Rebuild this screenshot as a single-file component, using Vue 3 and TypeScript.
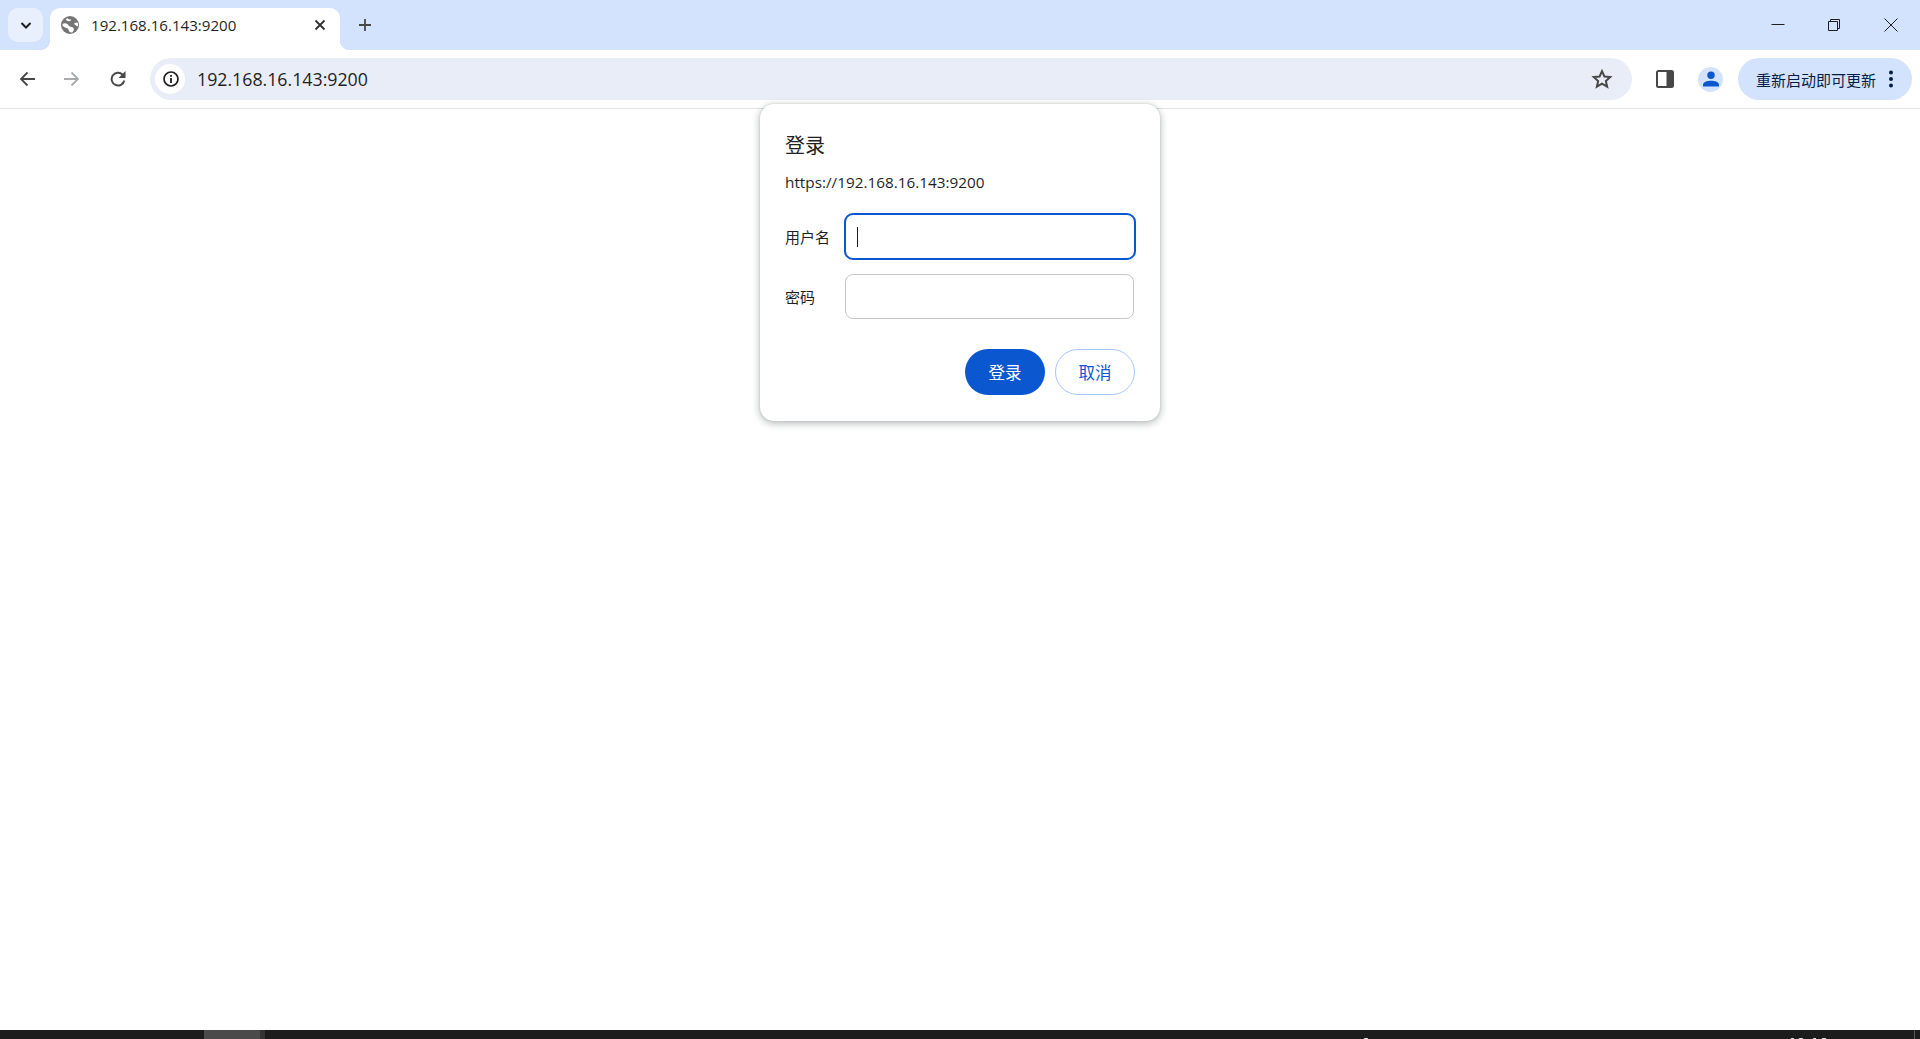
<script setup lang="ts">
const title: string = '192.168.16.143:9200'
</script>

<template>
  <div class="page">
    <header class="strip">
      <button class="tab-search" aria-label="tabs">
        <svg width="16" height="16" viewBox="0 0 16 16"><path d="M3.500 6l4.500 4.500L12.500 6" fill="none" stroke="#1f1f1f" stroke-width="2"/></svg>
      </button>
      <div class="tab">
        <svg class="globe" width="18" height="18" viewBox="0 0 18 18">
          <circle cx="9" cy="9" r="9" fill="#757575"/>
          <path d="M1.500 8C3 7.200 5 7 6.500 8.300c1 1 1.500 2 3 2.500 1.500.5 2.800.5 3.300 1.900.3 1-.3 2.300-1.300 3.500-1.300.4-2.800.2-3.300-.6-.5-1-.5-2-1.500-3C5.300 11.800 2.800 11.300 1.500 9.500zM6 2.200C7.300 3 8.800 3.500 10 3.500c.5.800-.5 1.700-2 1.700S5.300 4.300 4.800 3.200zM13.300 7c1.300-.5 2.500-.7 3.400-.5.400 1.300.4 2.700.2 3.900-1.200-.4-2.700-.9-3.300-1.800-.3-.5-.4-1-.3-1.600z" fill="#fff"/>
        </svg>
        <span class="tab-title">{{ title }}</span>
        <svg class="tab-close" width="12" height="12" viewBox="0 0 12 12"><path d="M1.500 1.500l9 9M10.500 1.500l-9 9" stroke="#303134" stroke-width="1.800"/></svg>
      </div>
      <svg class="plus" width="14" height="14" viewBox="0 0 14 14"><path d="M7 1v12M1 7h12" stroke="#474747" stroke-width="1.800"/></svg>
      <div class="win">
        <svg width="14" height="14" viewBox="0 0 14 14"><path d="M.500 6.500h13" stroke="#1f1f1f" stroke-width="1"/></svg>
        <svg width="14" height="14" viewBox="0 0 14 14"><path d="M1.500 3.500h9v9h-9zM3.500 3.500v-2h9v9h-2" fill="none" stroke="#1f1f1f" stroke-width="1"/></svg>
        <svg width="14" height="14" viewBox="0 0 14 14"><path d="M.500.500l13 13M13.500.500l-13 13" stroke="#1f1f1f" stroke-width="1"/></svg>
      </div>
    </header>

    <nav class="toolbar">
      <svg class="nav back" width="16" height="16" viewBox="0 0 16 16"><path d="M16 8H2.500M8.500 1.500L2 8l6.500 6.500" fill="none" stroke="#474747" stroke-width="1.800"/></svg>
      <svg class="nav fwd" width="16" height="16" viewBox="0 0 16 16"><path d="M0 8h13.500M7.500 1.500L14 8l-6.500 6.500" fill="none" stroke="#a8a9aa" stroke-width="1.800"/></svg>
      <svg class="nav reload" width="16" height="16" viewBox="0 0 16 16"><path d="M14.300 9.500A6.400 6.400 0 1 1 12.500 3.500" fill="none" stroke="#474747" stroke-width="1.900"/><path d="M15.500 0v7h-7z" fill="#474747"/></svg>
      <div class="omnibox">
        <span class="info">
          <svg width="16" height="16" viewBox="0 0 16 16"><circle cx="8" cy="8" r="7" fill="none" stroke="#1f1f1f" stroke-width="1.700"/><path d="M7.100 7h1.800v5H7.100zM7.100 4h1.800v1.800H7.100z" fill="#1f1f1f"/></svg>
        </span>
        <span class="url">{{ title }}</span>
        <svg class="star" width="22" height="22" viewBox="0 0 20 20"><path d="M10 2.800l2.200 4.900 5.300.5-4 3.600 1.200 5.200-4.700-2.800-4.700 2.800 1.200-5.200-4-3.600 5.300-.5z" fill="none" stroke="#474747" stroke-width="1.800"/></svg>
      </div>
      <svg class="side" width="18" height="18" viewBox="0 0 18 18"><rect width="18" height="18" rx="2.500" fill="#474747"/><rect x="2" y="2" width="8.500" height="14" fill="#fff"/></svg>
      <span class="avatar">
        <svg width="16" height="16" viewBox="0 0 16 16"><circle cx="8" cy="4.200" r="3.700" fill="#0b57d0"/><path d="M0 15.500v-1.800c0-2.500 4-3.900 8-3.900s8 1.400 8 3.900v1.800z" fill="#0b57d0"/></svg>
      </span>
      <div class="update">
        <span class="update-text">重新启动即可更新</span>
        <svg width="6" height="18" viewBox="0 0 6 18"><circle cx="3" cy="2.500" r="2" fill="#041e49"/><circle cx="3" cy="9" r="2" fill="#041e49"/><circle cx="3" cy="15.500" r="2" fill="#041e49"/></svg>
      </div>
    </nav>

    <main class="content"></main>

    <footer class="taskbar">
      <span class="task-active"></span><span class="task-edge"></span>
      <i class="peek p1"></i><i class="peek p2"></i><i class="peek p3"></i><i class="peek p4"></i><i class="peek p5"></i>
      <i class="task-line"></i>
    </footer>

    <section class="dialog">
      <h2 class="dlg-title">登录</h2>
      <p class="dlg-url">https://192.168.16.143:9200</p>
      <div class="field first">
        <label class="lbl">用户名</label>
        <div class="input focused"><i class="caret"></i></div>
      </div>
      <div class="field second">
        <label class="lbl">密码</label>
        <div class="input"></div>
      </div>
      <div class="actions">
        <button class="btn primary">登录</button>
        <button class="btn ghost">取消</button>
      </div>
    </section>
  </div>
</template>

<style scoped>
.page {
  position: relative;
  width: 1920px;
  height: 1039px;
  display: flex;
  flex-direction: column;
  overflow: hidden;
  background: #fff;
  font-family: "Open Sans", "Noto Sans CJK SC", sans-serif;
  color: #1f1f1f;
}
.strip {
  height: 50px;
  flex: none;
  background: #d3e3fd;
  display: flex;
  align-items: flex-start;
  padding-left: 8px;
}
.tab-search {
  width: 35px;
  height: 34px;
  margin-top: 8px;
  border: 0;
  padding: 0;
  border-radius: 10px;
  background: #e9f0fd;
  display: flex;
  align-items: center;
  justify-content: center;
}
.tab {
  width: 290px;
  height: 42px;
  margin: 8px 0 0 7px;
  background: #fff;
  border-radius: 10px 10px 0 0;
  display: flex;
  align-items: center;
  padding: 0 14px 8px 11px;
  box-sizing: border-box;
  position: relative;
}
.tab::before, .tab::after {
  content: "";
  position: absolute;
  bottom: 0;
  width: 10px;
  height: 10px;
}
.tab::before { left: -10px; background: radial-gradient(circle at 0 0, transparent 10px, #fff 10.500px); }
.tab::after { right: -10px; background: radial-gradient(circle at 100% 0, transparent 10px, #fff 10.500px); }
.globe { flex: none; }
.tab-title {
  margin-left: 12px;
  font-size: 15.100px;
  flex: 1;
  color: #1f1f1f;
}
.plus { margin: 18px 0 0 18px; }
.win {
  margin: 18px 0 0 auto;
  display: flex;
  gap: 42px;
  padding-right: 22px;
}
.win svg:last-child { margin-left: 1px; }
.toolbar {
  height: 59px;
  flex: none;
  box-sizing: border-box;
  background: #fff;
  border-bottom: 1px solid #e1e3e5;
  border-radius: 10px 10px 0 0;
  display: flex;
  align-items: center;
  padding: 0 8px 0 19px;
}
.nav { flex: none; }
.back { margin-right: 29px; }
.fwd { margin-right: 30px; }
.reload { margin-right: 24px; }
.omnibox {
  width: 1482px;
  height: 42px;
  border-radius: 21px;
  background: #e9edf7;
  display: flex;
  align-items: center;
  padding: 0 5px;
  box-sizing: border-box;
  flex: none;
}
.info {
  width: 30px;
  height: 30px;
  border-radius: 50%;
  background: #fff;
  display: flex;
  align-items: center;
  justify-content: center;
  padding-left: 1px;
  box-sizing: border-box;
}
.url {
  margin-left: 12px;
  font-size: 17.750px;
  flex: 1;
}
.star { margin-right: 14px; }
.side { margin-left: 24px; flex: none; }
.avatar {
  width: 25px;
  height: 25px;
  margin-left: 24px;
  border-radius: 50%;
  background: #d3e3fd;
  display: flex;
  align-items: center;
  justify-content: center;
  flex: none;
}
.update {
  width: 174px;
  height: 42px;
  margin-left: 15px;
  border-radius: 21px;
  background: #d3e3fd;
  display: flex;
  align-items: center;
  padding-left: 18px;
  box-sizing: border-box;
  flex: none;
}
.update-text {
  font-size: 15px;
  width: 132px;
  color: #041e49;
  white-space: nowrap;
}
.content { flex: 1; }
.taskbar {
  position: relative;
  height: 9px;
  flex: none;
  background: #1c1c1c;
  display: flex;
  padding-left: 204px;
}
.task-active { width: 56px; background: #4a4a4a; }
.task-edge { width: 5px; background: #333; }
.peek {
  position: absolute;
  bottom: 0;
  height: 1px;
  background: #d8d8d8;
}
.p1 { left: 1364px; width: 4px; }
.p2 { left: 1791px; width: 3px; }
.p3 { left: 1799px; width: 4px; }
.p4 { left: 1813px; width: 3px; }
.p5 { left: 1822px; width: 4px; }
.task-line {
  position: absolute;
  left: 1914px;
  top: 0;
  bottom: 0;
  width: 1px;
  background: #5a5a5a;
}
.dialog {
  position: absolute;
  left: 760px;
  top: 104px;
  width: 400px;
  height: 317px;
  box-sizing: border-box;
  background: #fff;
  border-radius: 14px;
  box-shadow: 0 2px 7px 1px rgba(60, 64, 67, .32), 0 0 2px rgba(60, 64, 67, .2);
  padding: 0 25px;
}
.dlg-title {
  margin: 0;
  padding-top: 28px;
  font-size: 20px;
  line-height: 28px;
  font-weight: 400;
}
.dlg-url {
  margin: 12px 0 0;
  font-size: 15.300px;
  line-height: 20px;
}
.field {
  display: flex;
  align-items: center;
}
.field.first { margin-top: 21px; height: 47px; }
.field.second { margin-top: 14px; height: 45px; }
.lbl {
  width: 60px;
  font-size: 15px;
  flex: none;
}
.input {
  width: 289px;
  height: 45px;
  box-sizing: border-box;
  border: 1px solid #c7c7c7;
  border-radius: 8px;
  background: #fff;
  display: flex;
  align-items: center;
  padding-left: 11px;
}
.input.focused {
  width: 292px;
  height: 47px;
  margin-left: -1px;
  flex: none;
  border: 2px solid #0b57d0;
  border-radius: 9px;
}
.caret {
  width: 1px;
  height: 20px;
  background: #1f1f1f;
}
.actions {
  display: flex;
  justify-content: flex-end;
  gap: 10px;
  margin-top: 30px;
}
.btn {
  height: 46px;
  width: 80px;
  border-radius: 23px;
  font-family: inherit;
  font-size: 16.500px;
  padding: 0;
}
.primary {
  border: 0;
  background: #0b57d0;
  color: #fff;
}
.ghost {
  background: #fff;
  border: 1px solid #a8c7fa;
  color: #0b57d0;
}
</style>
